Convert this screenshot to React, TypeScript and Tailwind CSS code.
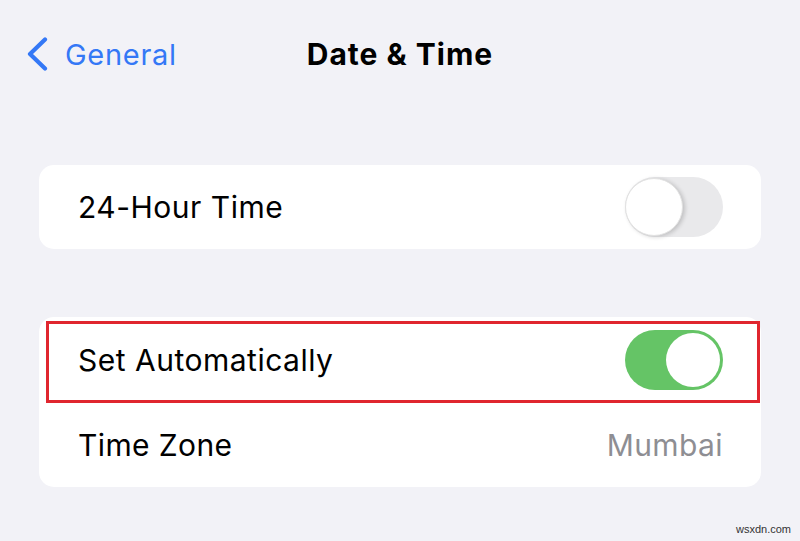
import React from 'react';

const Toggle = ({ on }: { on: boolean }) => {
  if (on) {
    return (
      <div className="flex h-[60px] w-[98px] items-center justify-end rounded-full bg-[#65c466] p-[3px]">
        <div className="h-[54px] w-[54px] rounded-full bg-white" />
      </div>
    );
  }
  return (
    <div className="flex h-[60px] w-[98px] items-center rounded-full bg-[#e9e9eb]">
      <div className="h-[58px] w-[58px] rounded-full border border-[#e2e2e2] bg-white shadow-[2px_1px_4px_rgba(0,0,0,0.18)]" />
    </div>
  );
};

export default function App() {
  return (
    <div
      className="relative h-[541px] w-[800px] overflow-hidden bg-[#f2f2f7]"
      style={{ fontFamily: 'Inter, "Liberation Sans", sans-serif' }}
    >
      {/* Navigation bar */}
      <div className="relative mt-[20px] flex h-[68px] items-center">
        <div className="flex items-center pl-[26px] text-[#3478f6]">
          <svg width="22" height="34" viewBox="0 0 22 34" fill="none">
            <path d="M19 2.5 L4 17 L19 31.5" stroke="currentColor" strokeWidth="4.2" strokeLinecap="round" strokeLinejoin="round" />
          </svg>
          <span className="ml-[17px] text-[29px] leading-none tracking-[0.7px]">General</span>
        </div>
        <div className="absolute inset-x-0 text-center text-[30px] font-bold leading-none tracking-[1px] text-black">
          Date &amp; Time
        </div>
      </div>

      {/* 24-hour card */}
      <div className="mx-[39px] mt-[77px] flex h-[84px] items-center justify-between rounded-[15px] bg-white pl-[39px] pr-[38px]">
        <span className="text-[30px] leading-none tracking-[0.5px] text-black">24-Hour Time</span>
        <Toggle on={false} />
      </div>

      {/* Automatic card */}
      <div className="mx-[39px] mt-[68px] flex flex-col rounded-[15px] bg-white">
        <div className="relative flex h-[85px] items-center justify-between pl-[39px] pr-[38px]">
          <span className="pt-[1px] text-[30px] leading-none tracking-[0.5px] text-black">Set Automatically</span>
          <div className="pt-[1px]">
            <Toggle on />
          </div>
          <div className="pointer-events-none absolute bottom-[-1px] left-[7px] right-[1px] top-[4px] border-[3px] border-[#e0262f]" />
        </div>
        <div className="flex h-[85px] items-center justify-between pl-[39px] pr-[38px]">
          <span className="text-[30px] leading-none tracking-[0.4px] text-black">Time Zone</span>
          <span className="text-[30px] leading-none tracking-[0.4px] text-[#8e8e93]">Mumbai</span>
        </div>
      </div>

      <div className="absolute bottom-[4px] right-[9px] text-[11px] text-[#333]" style={{ fontFamily: '"Liberation Sans", sans-serif' }}>
        wsxdn.com
      </div>
    </div>
  );
}
